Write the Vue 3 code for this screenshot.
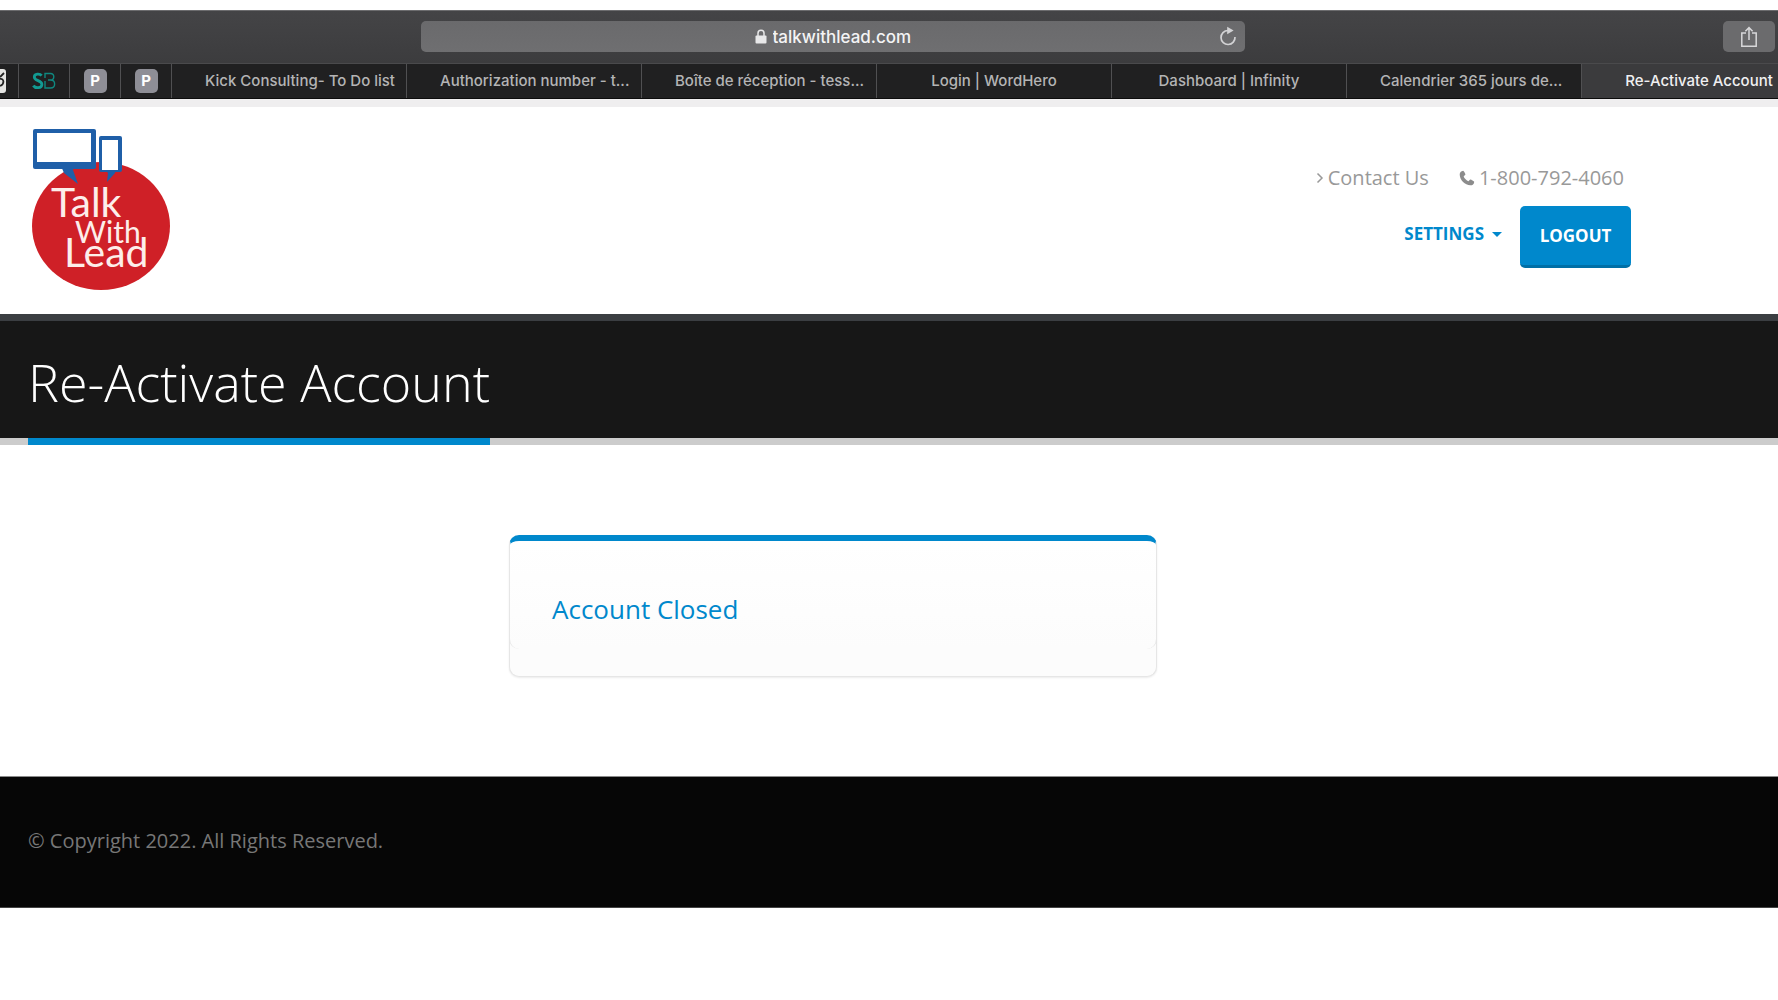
<script setup>
import { ref } from 'vue'

const address = ref('talkwithlead.com')

const tabs = [
  { title: 'Kick Consulting- To Do list', long: true },
  { title: 'Authorization number - t...', long: true },
  { title: 'Boîte de réception - tess...', long: true },
  { title: 'Login | WordHero' },
  { title: 'Dashboard | Infinity' },
  { title: 'Calendrier 365 jours de...', long: true },
  { title: 'Re-Activate Account', active: true },
]
</script>

<template>
  <div class="window">
    <div class="toolbar">
      <label class="address">
        <svg class="lock" viewBox="0 0 12 15" aria-hidden="true">
          <path d="M3 7V4.2a3 3 0 0 1 6 0V7" fill="none" stroke="#e8e8e9" stroke-width="1.5" />
          <rect x="0.5" y="6.5" width="11" height="8" rx="1" fill="#e8e8e9" />
        </svg>
        <input v-model="address" class="address-input" type="text" aria-label="Address" />
        <button class="reload" type="button" aria-label="Reload">
          <svg viewBox="0 0 18 20" aria-hidden="true">
            <path d="M9 4.5a7 7 0 1 0 7 6.5" fill="none" stroke="#d2d2d4" stroke-width="1.7" />
            <path d="M8.2 0.8v7.4l6.4-3.7z" fill="#d2d2d4" />
          </svg>
        </button>
      </label>
      <button class="share" type="button" aria-label="Share">
        <svg viewBox="0 0 18 22" aria-hidden="true">
          <path
            d="M6 7H1.8v13.2h14.4V7H12M9 14V1.6M5.4 5.2 9 1.6l3.6 3.6"
            fill="none"
            stroke="#d8d8da"
            stroke-width="1.5"
          />
        </svg>
      </button>
    </div>

    <nav class="tabs" aria-label="Tabs">
      <a class="pin pin-first" href="#" aria-label="Pinned tab">
        <svg class="pin-cut" viewBox="0 0 7 26" aria-hidden="true">
          <path d="M0 1h3a3 3 0 0 1 3 3v18a3 3 0 0 1-3 3H0z" fill="#e4e4e2" />
          <path d="M0 9l4-4M0 11c4-1 5 5 0 7" fill="none" stroke="#222" stroke-width="1.8" />
        </svg>
      </a>
      <a class="pin" href="#" aria-label="SB">
        <svg class="sb" viewBox="0 0 24 18" aria-hidden="true">
          <path
            d="M9.6 3.6C8 1.4 2.3 1.3 2.3 5c0 4.2 7.6 3 7.6 7.4 0 4-6.6 4.2-8.6 1.2"
            fill="none"
            stroke="#129a92"
            stroke-width="2.8"
          />
          <path
            d="M13 6V1.5h5.500c4.500 0 4.300 6.500 0 6.500H16M18.500 8c5.500 0 5.500 8 0 8H13V9"
            fill="none"
            stroke="#0f8880"
            stroke-width="1.4"
          />
        </svg>
      </a>
      <a v-for="n in 2" :key="n" class="pin" href="#"><span class="pin-letter">P</span></a>
      <a
        v-for="tab in tabs"
        :key="tab.title"
        class="tab"
        :class="{ long: tab.long, active: tab.active }"
        href="#"
      ><span class="tab-title">{{ tab.title }}</span></a>
    </nav>

    <header class="header">
      <a class="logo" href="#" aria-label="Talk With Lead">
        <svg viewBox="0 0 142 164" aria-hidden="true">
          <ellipse cx="71" cy="98" rx="69" ry="64" fill="#cf2027" />
          <path d="M31 38h13l-1 4 5 14-14-11z" fill="#1f5fa8" />
          <path d="M75 42h11l-1 3-8 9 1-9z" fill="#1f5fa8" />
          <rect x="3" y="1" width="63" height="40" rx="2" fill="#1f5fa8" />
          <rect x="7" y="5" width="54" height="29" fill="#fff" />
          <rect x="69" y="8" width="23" height="36" rx="2" fill="#1f5fa8" />
          <rect x="72" y="12" width="16" height="30" fill="#fff" />
          <text x="21" y="89" font-size="41">Talk</text>
          <text x="45" y="115" font-size="30">With</text>
          <text x="34" y="139" font-size="41">Lead</text>
        </svg>
      </a>
      <div class="header-side">
        <nav class="contact" aria-label="Contact">
          <a href="#">
            <svg class="angle" viewBox="0 0 8 12" aria-hidden="true">
              <path d="M1.5 1.5 6 6l-4.5 4.5" fill="none" stroke="#999" stroke-width="1.5" />
            </svg>
            Contact Us
          </a>
          <a href="tel:1-800-792-4060">
            <svg class="phone" viewBox="0 0 16 16" aria-hidden="true">
              <path
                d="M4.2 0.8C2 1 0.6 2.6 0.7 4.7c.3 5.5 5.2 10.3 10.6 10.6 2.1.1 3.7-1.3 3.9-3.4 0-.5-3-2.2-3.7-2.3-.8-.1-1.3 1.7-2.1 1.6-1.7-.5-4.2-3-4.7-4.7-.1-.8 1.8-1.3 1.7-2.1C6.4 3.7 4.7 0.8 4.2 0.8z"
                fill="#8c8c8c"
              />
            </svg>
            1-800-792-4060
          </a>
        </nav>
        <nav class="menu" aria-label="Account">
          <button class="settings" type="button">SETTINGS<span class="caret"></span></button>
          <button class="logout" type="button">LOGOUT</button>
        </nav>
      </div>
    </header>

    <section class="title-bar">
      <h1>Re-Activate Account</h1>
    </section>

    <main class="content">
      <section class="card">
        <div class="card-body">
          <h2>Account Closed</h2>
        </div>
      </section>
    </main>

    <footer class="footer">
      <p>© Copyright 2022. All Rights Reserved.</p>
    </footer>
  </div>
</template>

<style>
body {
  margin: 0;
  background: #fff;
}
</style>

<style scoped>
.window {
  padding-top: 10px;
  overflow: hidden;
  font-family: 'Open Sans', sans-serif;
  color: #999;
}

a {
  color: inherit;
  text-decoration: none;
}

button {
  border: 0;
  padding: 0;
  font: inherit;
  cursor: pointer;
}

svg {
  display: block;
}

/* Browser toolbar */
.toolbar {
  box-sizing: border-box;
  height: 54px;
  padding: 10px 3px 0 421px;
  display: flex;
  align-items: flex-start;
  justify-content: space-between;
  background: linear-gradient(#444446, #3c3c3e);
  border-top: 1px solid #6c6c6e;
  border-bottom: 1px solid #4a4a4c;
}

.address {
  position: relative;
  flex: 0 1 824px;
  height: 31px;
  display: flex;
  align-items: center;
  justify-content: center;
  gap: 6px;
  border-radius: 5px;
  background: linear-gradient(#6a6a6c, #6f6f71);
}

.lock {
  width: 12px;
  height: 15px;
}

.address-input {
  width: 139px;
  padding: 0;
  border: 0;
  outline: 0;
  background: none;
  color: #f4f4f5;
  font: 500 17px/24px Inter, sans-serif;
}

.reload {
  position: absolute;
  right: 8px;
  top: 5px;
  background: none;
}

.reload svg {
  width: 18px;
  height: 20px;
}

.share {
  width: 52px;
  height: 31px;
  display: flex;
  align-items: center;
  justify-content: center;
  border-radius: 5px;
  background: #6b6b6d;
}

.share svg {
  width: 18px;
  height: 22px;
}

/* Tab strip runs past the right edge of the window */
.tabs {
  height: 34px;
  margin-right: -39px;
  display: flex;
  background: #202021;
  border-bottom: 1px solid #0c0c0c;
  font: 500 15px/34px Inter, sans-serif;
  color: #b4b4b5;
}

.pin {
  box-sizing: border-box;
  flex: none;
  width: 51px;
  display: flex;
  align-items: center;
  justify-content: center;
  border-right: 1px solid #505052;
}

.pin-first {
  width: 19px;
  justify-content: flex-start;
}

.pin-cut {
  width: 7px;
  height: 26px;
}

.sb {
  width: 24px;
  height: 18px;
}

.pin-letter {
  width: 23px;
  height: 24px;
  border-radius: 5px;
  background: #8e8e96;
  color: #fff;
  font-size: 15px;
  font-weight: 700;
  line-height: 24px;
  text-align: center;
}

.tab {
  flex: 1 1 0;
  min-width: 0;
  border-right: 1px solid #505052;
  text-align: center;
  white-space: nowrap;
}

.tab-title {
  display: block;
}

.tab.long .tab-title {
  padding-left: 33px;
  text-align: left;
}

.tab.active {
  background: #3b3b3d;
  color: #f0f0f1;
}

/* Site header */
.header {
  box-sizing: border-box;
  min-height: 215px;
  padding: 21px 147px 0 28px;
  display: flex;
  justify-content: space-between;
  align-items: flex-start;
  border-top: 8px solid #efeeef;
}

.logo {
  margin-left: 2px;
}

.logo svg {
  width: 142px;
  height: 164px;
}

.logo text {
  font-family: Lato, sans-serif;
  fill: #fdeeea;
}

.header-side {
  padding-top: 36px;
}

.contact {
  display: flex;
  justify-content: flex-end;
  gap: 30px;
  padding-right: 7px;
  font-size: 20px;
  line-height: 28px;
}

.contact a {
  display: flex;
  align-items: center;
  gap: 4px;
}

.angle {
  width: 8px;
  height: 12px;
}

.phone {
  width: 16px;
  height: 16px;
}

.menu {
  display: flex;
  justify-content: flex-end;
  align-items: flex-start;
  gap: 18px;
  margin-top: 14px;
  font-size: 17px;
  font-weight: 700;
}

.settings {
  display: flex;
  align-items: center;
  gap: 8px;
  background: none;
  color: #0088cc;
  line-height: 56px;
}

.caret {
  border: 5px solid transparent;
  border-top-color: #0088cc;
  border-bottom: 0;
}

.logout {
  width: 111px;
  height: 62px;
  border-bottom: 3px solid #006fa6;
  border-radius: 5px;
  background: #0088cc;
  color: #fff;
}

/* Page title */
.title-bar {
  height: 117px;
  padding-left: 28px;
  display: flex;
  background: #171717;
  border-top: 7px solid #3b3e42;
  border-bottom: 7px solid #ccc;
}

h1 {
  margin: 0 0 -7px;
  border-bottom: 7px solid #0088cc;
  color: #fff;
  font-size: 52px;
  font-weight: 300;
  line-height: 122px;
}

/* Main content */
.content {
  padding: 90px 112px 99px 0;
}

.card {
  box-sizing: border-box;
  width: 648px;
  max-width: 100%;
  margin: 0 auto;
  padding-bottom: 27px;
  border: 1px solid #e6e6e6;
  border-top: 0;
  border-radius: 10px;
  background: #fcfcfc;
  box-shadow: 0 1px 2px rgba(0, 0, 0, 0.08);
}

.card-body {
  margin: 0 -1px;
  padding: 50px 42px 22px;
  border: 0 solid #e6e6e6;
  border-width: 6px 1px 0;
  border-top-color: #0088cc;
  border-radius: 10px;
  background: linear-gradient(#fff, #fcfcfc);
}

h2 {
  margin: 0;
  color: #0088cc;
  font-size: 26px;
  font-weight: 400;
  line-height: 36px;
}

.footer {
  padding: 49px 28px 51px;
  background: #060606;
  border-top: 1px solid #8a8a8a;
  border-bottom: 1px solid #444;
  color: #777;
  font-size: 20px;
  line-height: 30px;
}

.footer p {
  margin: 0;
}
</style>
